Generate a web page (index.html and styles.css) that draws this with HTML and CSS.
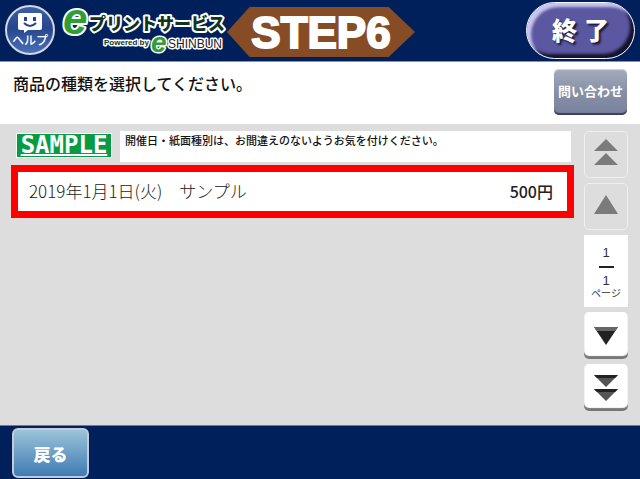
FILE: index.html
```html
<!DOCTYPE html>
<html lang="ja">
<head>
  <meta charset="UTF-8">
  <meta name="viewport" content="width=device-width, initial-scale=1.0">
  <title>eプリントサービス</title>
  <link rel="stylesheet" href="styles.css">
</head>
<body>
  <header class="header">
    <button type="button" class="help-btn">
      <svg class="help-face" viewBox="0 0 24 20" aria-hidden="true">
        <path d="M2 0h20a2 2 0 0 1 2 2v13a2 2 0 0 1-2 2H10l-4 3v-3H2a2 2 0 0 1-2-2V2a2 2 0 0 1 2-2z" fill="#fff"/>
        <rect x="6" y="4" width="3" height="4" fill="#26468c"/>
        <rect x="15" y="4" width="3" height="4" fill="#26468c"/>
        <path d="M6 10q6 6 12 0" fill="none" stroke="#26468c" stroke-width="2"/>
      </svg>
      <span>ヘルプ</span>
    </button>

    <svg class="logo" viewBox="0 0 166 54" role="img" aria-label="eプリントサービス Powered by e SHINBUN">
      <text class="logo-e" x="2" y="32">e</text>
      <text class="logo-name" x="28" y="28">プリントサービス</text>
      <text class="logo-powered" x="43" y="43">Powered by</text>
      <text class="logo-e logo-e-small" x="90" y="50">e</text>
      <text class="logo-shinbun" x="107" y="46">SHINBUN</text>
    </svg>

    <h1 class="step">STEP6</h1>

    <button type="button" class="end-btn">終 了</button>
  </header>

  <section class="prompt">
    <p>商品の種類を選択してください。</p>
    <button type="button" class="contact-btn">問い合わせ</button>
  </section>

  <main class="content">
    <div class="products">
      <div class="notice-row">
        <strong class="sample">SAMPLE</strong>
        <p class="notice">開催日・紙面種別は、お間違えのないようお気を付けください。</p>
      </div>
      <button type="button" class="product">
        <span>2019年1月1日(火)　サンプル</span>
        <span class="price">500円</span>
      </button>
    </div>

    <nav class="pager" aria-label="ページ">
      <button type="button" class="page-btn" aria-label="最初のページ" disabled>
        <svg viewBox="0 0 24 26"><path d="M12 0l12 12H0zM12 14l12 12H0z" fill="#7b7b7b"/></svg>
      </button>
      <button type="button" class="page-btn" aria-label="前のページ" disabled>
        <svg viewBox="0 0 24 26"><path d="M12 4l12 19H0z" fill="#7b7b7b"/></svg>
      </button>
      <div class="page-count">
        <span>1</span>
        <span class="page-total">1</span>
        <small>ページ</small>
      </div>
      <button type="button" class="page-btn active" aria-label="次のページ">
        <svg viewBox="0 0 24 26">
          <path d="M0 4h24L12 22z" fill="#222"/>
          <path d="M0 4h24l-3 4H3z" fill="#666"/>
        </svg>
      </button>
      <button type="button" class="page-btn active" aria-label="最後のページ">
        <svg viewBox="0 0 24 26">
          <path d="M0 0h24L12 12zM0 14h24L12 26z" fill="#555"/>
          <path d="M0 0h24l-3 3H3zM0 14h24l-3 3H3z" fill="#222"/>
        </svg>
      </button>
    </nav>
  </main>

  <footer class="footer">
    <button type="button" class="back-btn">戻る</button>
  </footer>
</body>
</html>
```
FILE: styles.css
```css
:root {
  --navy: #00205b;
  --gray: #dddddd;
  --red: #ff0000;
  --brown: #854c26;
}

* {
  box-sizing: border-box;
  margin: 0;
  padding: 0;
}

body {
  display: flex;
  flex-direction: column;
  min-height: 100vh;
  background: #fff;
  color: #111;
  font-family: "Liberation Sans", "Noto Sans CJK JP", sans-serif;
}

button {
  border: none;
  font-family: inherit;
  cursor: pointer;
}

/* ヘッダー */
.header {
  display: flex;
  align-items: flex-start;
  height: 62px;
  padding: 2px 5px 0;
  background: var(--navy);
  border-bottom: 1px solid #8a8fb5;
}

.help-btn {
  display: flex;
  flex-direction: column;
  align-items: center;
  flex: none;
  width: 50px;
  height: 50px;
  margin-top: 3px;
  padding-top: 6px;
  border: 2px solid #d3d8e4;
  border-radius: 50%;
  background: linear-gradient(#3c5fa6, #26468c 45%, #4a6eb8);
  color: #fff;
  font-size: 12px;
  font-weight: 500;
  line-height: 16px;
}

.help-face {
  width: 24px;
  height: 20px;
}

.logo {
  flex: none;
  width: 166px;
  height: 54px;
  margin-left: 6px;
  overflow: visible;
}

.logo text {
  stroke: #fff;
  stroke-width: 4px;
  stroke-linejoin: round;
  paint-order: stroke;
}

.logo .logo-e {
  fill: #2f9e35;
  font: italic bold 44px "Liberation Sans", sans-serif;
}

.logo .logo-e-small {
  font-size: 28px;
  stroke-width: 3px;
}

.logo .logo-name {
  fill: #123322;
  font: 900 17px "Noto Sans CJK JP", sans-serif;
}

.logo .logo-powered {
  fill: #123322;
  font: bold 8px "Liberation Sans", sans-serif;
  stroke-width: 3px;
}

.logo .logo-shinbun {
  fill: #222;
  font: 12px "Liberation Sans", sans-serif;
  stroke-width: 3px;
}

.step {
  width: 188px;
  height: 50px;
  margin-top: 5px;
  background: var(--brown);
  clip-path: polygon(0 50%, 12% 0, 86% 0, 100% 50%, 86% 100%, 12% 100%);
  color: #fff;
  font-size: 44px;
  line-height: 52px;
  text-align: center;
  -webkit-text-stroke: 2px #fff;
}

.end-btn {
  flex: none;
  width: 109px;
  height: 57px;
  margin-left: auto;
  border: 1px solid #f4f4fa;
  border-radius: 29px;
  background: #5b57a0;
  box-shadow: inset 4px 4px 3px #c9c7f0, inset -4px -4px 3px #15132f;
  color: #fff;
  font-size: 25px;
  font-weight: 900;
  line-height: 48px;
  text-shadow: 2px 2px 2px #1a1838;
}

/* 案内文 */
.prompt {
  display: flex;
  justify-content: space-between;
  height: 62px;
  padding: 7px 13px 0;
}

.prompt p {
  font-size: 16px;
  font-weight: 500;
  line-height: 32px;
}

.contact-btn {
  width: 73px;
  height: 46px;
  padding-bottom: 3px;
  border-radius: 5px;
  background: linear-gradient(#a3abbd, #8890a5 50%, #7881a0);
  box-shadow: inset 0 1px 1px #d5d9e2, inset 0 -2px 1px #3a4156;
  color: #fff;
  font-size: 13px;
  font-weight: 700;
}

/* 商品一覧 */
.content {
  display: flex;
  flex: 1;
  align-items: flex-start;
  gap: 10px;
  padding: 7px 12px 0 11px;
  background: var(--gray);
}

.products {
  flex: 1;
}

.notice-row {
  display: flex;
  align-items: flex-start;
  gap: 8px;
  padding: 0 3px 3px 5px;
}

.sample {
  width: 96px;
  height: 25px;
  margin-top: 2px;
  border: 1px solid #fff;
  background: #089b43;
  color: #fff;
  font: bold 24px/22px "DejaVu Sans Mono", monospace;
  text-align: center;
  text-decoration: underline;
  text-decoration-thickness: 2px;
  text-underline-offset: 1px;
}

.notice {
  flex: 1;
  height: 31px;
  padding-left: 5px;
  background: #fff;
  font-size: 11px;
  font-weight: 500;
  line-height: 20px;
}

.product {
  display: flex;
  align-items: center;
  justify-content: space-between;
  width: 100%;
  height: 53px;
  padding: 0 14px 2px 11px;
  border: 7px solid var(--red);
  background: #fff;
  color: #222;
  font-family: "Noto Sans CJK JP", sans-serif;
  font-size: 17px;
  font-weight: 300;
}

.price {
  font-size: 16px;
  font-weight: 500;
}

/* ページ送り */
.pager {
  display: flex;
  flex-direction: column;
  gap: 5px;
  width: 44px;
}

.page-btn {
  display: flex;
  align-items: center;
  justify-content: center;
  height: 47px;
  padding-bottom: 5px;
  border: 1px solid #efefef;
  border-radius: 5px;
  background: var(--gray);
}

.page-btn svg {
  width: 24px;
  height: 26px;
}

.page-btn.active {
  padding-bottom: 0;
  border: none;
  background: #fff;
  box-shadow: inset 0 -3px 1px #777;
}

.page-count {
  display: flex;
  flex-direction: column;
  align-items: center;
  height: 72px;
  padding-top: 9px;
  background: #fff;
  color: #333;
  font-size: 13px;
  line-height: 18px;
}

.page-total {
  width: 15px;
  margin-top: 4px;
  padding-top: 6px;
  border-top: 2px solid #222;
  line-height: 14px;
  text-align: center;
}

.page-count small {
  font-size: 10px;
  line-height: 12px;
}

/* フッター */
.footer {
  height: 54px;
  padding: 2px 12px 0;
  background: var(--navy);
  border-top: 1px solid #6f7899;
}

.back-btn {
  width: 77px;
  height: 50px;
  border: 2px solid #c3cad8;
  border-radius: 6px;
  background: linear-gradient(#9cc3d8, #6d9fc6 50%, #3f7cb4);
  color: #fff;
  font-size: 17px;
  font-weight: 900;
}
```
